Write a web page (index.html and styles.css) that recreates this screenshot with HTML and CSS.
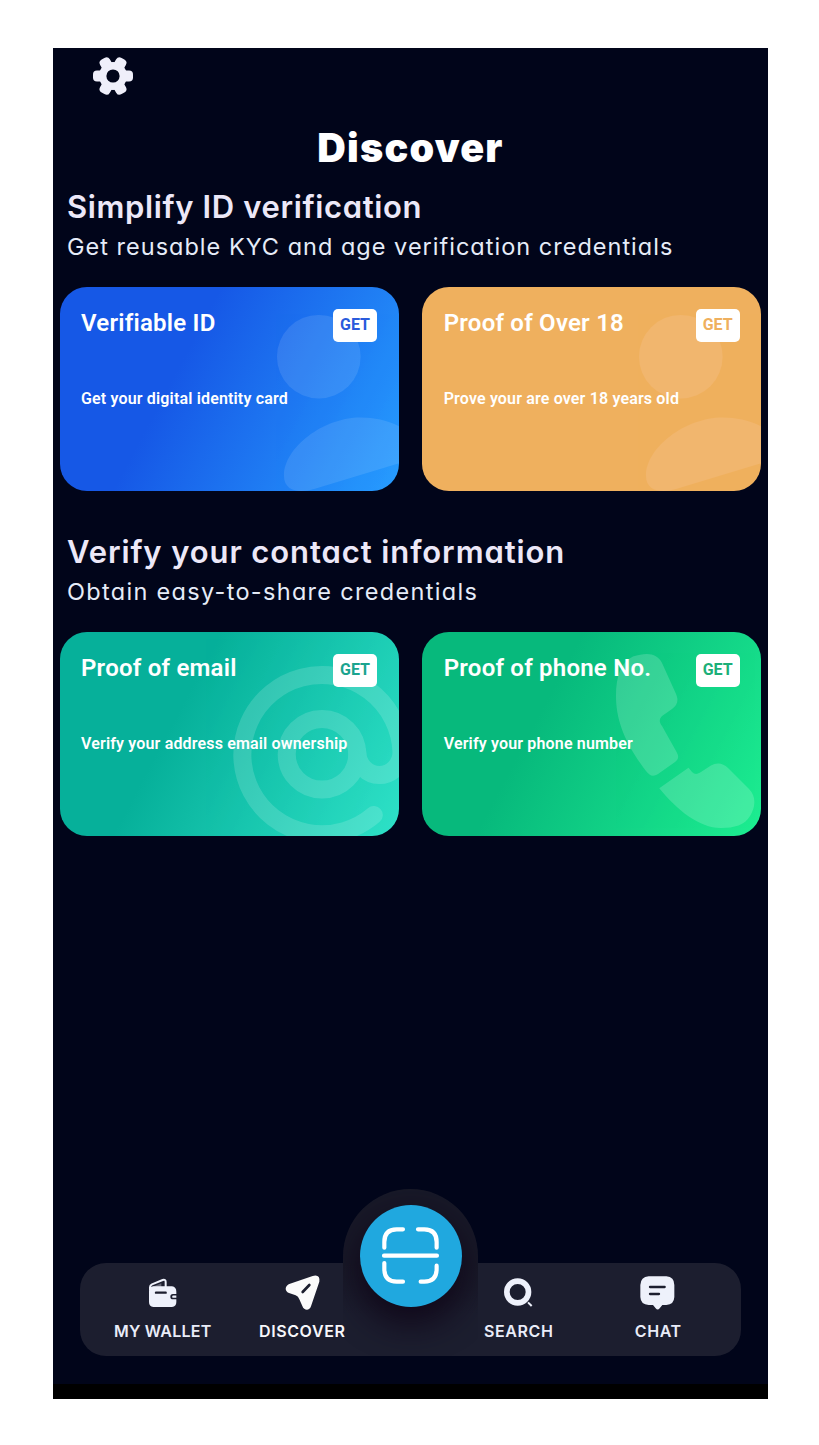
FILE: index.html
```html
<!DOCTYPE html>
<html lang="en">
<head>
<meta charset="utf-8">
<title>Discover</title>
<link rel="stylesheet" href="styles.css">
</head>
<body>
<main class="phone">
  <header class="topbar">
    <svg class="gear" viewBox="-20 -20 40 40" aria-label="Settings">
      <g class="gear-body">
        <circle r="14"/>
        <rect x="-20" y="-5.6" width="40" height="11.2" rx="4"/>
        <rect x="-20" y="-5.6" width="40" height="11.2" rx="4" transform="rotate(60)"/>
        <rect x="-20" y="-5.6" width="40" height="11.2" rx="4" transform="rotate(120)"/>
      </g>
      <circle class="gear-hole" r="6.6"/>
    </svg>
    <h1 class="title">Discover</h1>
  </header>

  <section class="section">
    <h2 class="heading heading-id">Simplify ID verification</h2>
    <p class="sub sub-id">Get reusable KYC and age verification credentials</p>
    <div class="cards">
      <article class="card blue">
        <svg class="art" viewBox="0 0 339 203.5"><circle cx="258.8" cy="69.7" r="41.8"/><path d="M224 189C224 160 264 130.500 300.500 130.500C318 130.500 333 135 350 145V173L254 202C241 206 224 205 224 189Z"/></svg>
        <div class="card-top"><h3 class="card-title">Verifiable ID</h3><button class="get">GET</button></div>
        <p class="desc">Get your digital identity card</p>
      </article>
      <article class="card orange">
        <svg class="art" viewBox="0 0 339 203.5"><circle cx="258.8" cy="69.7" r="41.8"/><path d="M224 189C224 160 264 130.500 300.500 130.500C318 130.500 333 135 350 145V173L254 202C241 206 224 205 224 189Z"/></svg>
        <div class="card-top"><h3 class="card-title">Proof of Over 18</h3><button class="get">GET</button></div>
        <p class="desc">Prove your are over 18 years old</p>
      </article>
    </div>
  </section>

  <section class="section">
    <h2 class="heading heading-contact">Verify your contact information</h2>
    <p class="sub sub-contact">Obtain easy-to-share credentials</p>
    <div class="cards">
      <article class="card teal">
        <svg class="art art-line" viewBox="0 0 339 203.5"><circle cx="262" cy="122.3" r="35.3"/><path d="M297.300 120A22.100 23 0 0 0 341.500 120A79.600 79.600 0 1 0 313.800 183"/></svg>
        <div class="card-top"><h3 class="card-title">Proof of email</h3><button class="get">GET</button></div>
        <p class="desc">Verify your address email ownership</p>
      </article>
      <article class="card green">
        <svg class="art" viewBox="0 0 339 203.5"><path d="M211 24.500C225 20 235 21 240 31L254 62C257 69 255 73 250 77L240 84C237 87 237 90 240 94L254 119C257 124 257 127 253 130L236 142C231 145 228 144 224 139C202 110 194 87 194 64C194 44 199 30 211 24.500Z"/><path d="M237.300 156.300L266.500 135.700L270 140C273 143 276 142 279 140L289 133.500C295 130 301 131 306 136L327 157C335 165 333 176 328 184C323 193 312 196 299 196C277 196 255 178 237.300 156.300Z"/></svg>
        <div class="card-top"><h3 class="card-title">Proof of phone No.</h3><button class="get">GET</button></div>
        <p class="desc">Verify your phone number</p>
      </article>
    </div>
  </section>

  <div class="spacer"></div>

  <nav class="nav">
    <div class="nav-group">
      <a class="item">
        <svg class="icon" viewBox="221 70 120 120">
          <path class="line" d="M242 122V113Q242 107 248 104L280 91Q289 88 289 97V112"/>
          <path class="fill" d="M246 113L276 101V112H246Z" opacity=".35"/>
          <path class="fill" d="M252 110H308Q321 112 321 126V133H311A7.500 7.500 0 0 0 311 149H321V157Q321 171 308 172H252Q239 171 239 157V124Q239 111 252 110Z"/>
          <path class="cut" d="M260 129H289"/><path class="nub" d="M321 137.500H312A3.500 3.500 0 0 0 312 144.500H321Z"/>
        </svg>
        <span class="label label-wallet">MY WALLET</span>
      </a>
      <a class="item">
        <svg class="icon" viewBox="637 70 120 120">
          <path class="white" d="M661 102L729 79Q752 73 749 96L724 170C720 184 703 184 698 169L689 149Q686 140 678 137L658 130C644 124 645 107 661 102Z"/>
          <path class="cut cut-bold" d="M699 127L719 106"/>
        </svg>
        <span class="label label-bright">DISCOVER</span>
      </a>
    </div>
    <div class="nav-group">
      <a class="item">
        <svg class="icon" viewBox="147 70 120 120">
          <circle class="lens" cx="203" cy="127" r="32.500"/>
          <path class="handle" d="M234 158L245 169"/>
        </svg>
        <span class="label">SEARCH</span>
      </a>
      <a class="item">
        <svg class="icon" viewBox="565 70 120 120">
          <path class="fill" d="M597 80H650Q674 82 674 106V142Q673 165 650 166H638L630 176Q624 183 618 176L610 166H597Q573 165 572 142V106Q573 82 597 80Z"/>
          <path class="cut" d="M601 112H645M601 133H628"/>
        </svg>
        <span class="label">CHAT</span>
      </a>
    </div>
    <div class="scan">
      <button class="scan-button" aria-label="Scan">
        <svg class="scan-icon" viewBox="150 136 184 184"><path d="M219 149H200Q163 149 163 187V204M264 149H283Q320 149 320 187V204M162 228H321M163 250V268Q163 306 200 306H219M320 258V268Q320 306 283 306H272"/></svg>
      </button>
    </div>
  </nav>
  <div class="system-bar"></div>
</main>
</body>
</html>
```
FILE: styles.css
```css
* { box-sizing: border-box; margin: 0; padding: 0; }
body { background: #fff; font-family: Inter, "Open Sans", sans-serif; font-feature-settings: "cv11"; white-space: nowrap; }
.phone { width: 715px; height: 1351px; margin: 48px 0 0 53px; background: #01051a; display: flex; flex-direction: column; overflow: hidden; }
.topbar { height: 139px; display: flex; flex-direction: column; padding-top: 8px; }
.gear { width: 40px; height: 40px; margin-left: 40px; display: block; }
.gear-body { fill: #efeffa; }
.gear-hole { fill: #01051a; }
.title { margin-top: 28px; text-align: center; color: #fff; font-size: 39.5px; line-height: 48px; font-weight: 900; letter-spacing: 1.2px; }
.section { margin-bottom: 41.5px; }
.heading { padding-left: 14px; color: #ece8f8; font-size: 31px; line-height: 40px; font-weight: 600; }
.heading-id { letter-spacing: 0.63px; }
.heading-contact { letter-spacing: 0.9px; }
.sub { margin: 5px 0 25px; padding-left: 14px; color: #e6ecf8; font-size: 23.5px; line-height: 30px; font-weight: 400; }
.sub-id { letter-spacing: 1.01px; }
.sub-contact { letter-spacing: 1.31px; }
.cards { display: grid; grid-template-columns: 339px 339px; column-gap: 23.7px; padding-left: 6.5px; }
.card { position: relative; height: 203.500px; padding: 21px 21.500px; border-radius: 27px; overflow: hidden; color: #fff; font-family: Roboto, sans-serif; font-feature-settings: normal; }
.blue { background: linear-gradient(118deg, #1658e6 36%, #279dff); --tone: #2a5bdc; }
.orange { background: #efb05e; --tone: #efb05e; }
.teal { background: linear-gradient(118deg, #06b09a 36%, #2fe2c8); --tone: #1ba48f; }
.green { background: linear-gradient(118deg, #07b97c 36%, #1dee91); --tone: #1caf78; }
.art { position: absolute; inset: 0; width: 339px; height: 203.500px; fill: #fff; opacity: .1; }
.orange .art { fill: #f6c294; opacity: .3; }
.green .art { opacity: .17; }
.art-line { fill: none; stroke: #fff; stroke-width: 18; stroke-linecap: round; opacity: .15; }
.card-top { position: relative; height: 30px; display: flex; justify-content: space-between; }
.card-title { font-size: 24px; line-height: 30px; font-weight: 600; letter-spacing: 0.22px; }
.get { width: 44px; height: 32.500px; margin-top: 1px; border: 0; border-radius: 5px; background: #fff; color: var(--tone); font: 700 16px/32px Roboto, sans-serif; }
.desc { position: relative; margin-top: 51px; font-size: 16px; line-height: 20px; font-weight: 600; letter-spacing: 0.16px; }
.spacer { flex: 1; }
.nav { position: relative; width: 661px; height: 93px; margin-left: 27px; padding: 10.300px 13px 0; border-radius: 26px; background: #1c1e2f; display: flex; justify-content: space-between; }
.nav-group { display: flex; position: relative; z-index: 2; }
.item { width: 139.500px; display: flex; flex-direction: column; align-items: center; }
.icon { width: 40px; height: 40px; margin-bottom: 8px; display: block; }
.label { color: #e9ecf8; font-size: 16px; line-height: 20px; font-weight: 600; letter-spacing: 0.6px; }
.label-wallet { letter-spacing: 0.25px; }
.label-bright { color: #f7f7fb; }
.fill { fill: #eef1fb; }
.white { fill: #fbfbfb; }
.line { fill: none; stroke: #eef1fb; stroke-width: 6; stroke-linejoin: round; }
.cut { fill: none; stroke: #1c1e2f; stroke-width: 7; stroke-linecap: round; }
.cut-bold { stroke-width: 8; }
.nub { fill: #eef1fb; }
.lens { fill: none; stroke: #eef1fb; stroke-width: 17; }
.handle { stroke: #eef1fb; stroke-width: 6; }
.scan { position: absolute; left: 263px; top: -74.500px; width: 135px; height: 167.500px; padding-top: 16.500px; border-radius: 67.500px 67.500px 0 0; background: linear-gradient(#181928 45%, #1c1e2f 75%); display: flex; justify-content: center; align-items: flex-start; overflow: hidden; }
.scan-button { width: 102px; height: 102px; flex: none; border: 0; border-radius: 50%; background: #20a8df; box-shadow: 0 14px 32px 4px rgba(16, 7, 24, .9); display: grid; place-items: center; }
.scan-icon { width: 61.300px; height: 61.300px; fill: none; stroke: #fff; stroke-width: 12.500; stroke-linecap: round; }
.system-bar { height: 15px; margin-top: 28px; background: #000; }
```
